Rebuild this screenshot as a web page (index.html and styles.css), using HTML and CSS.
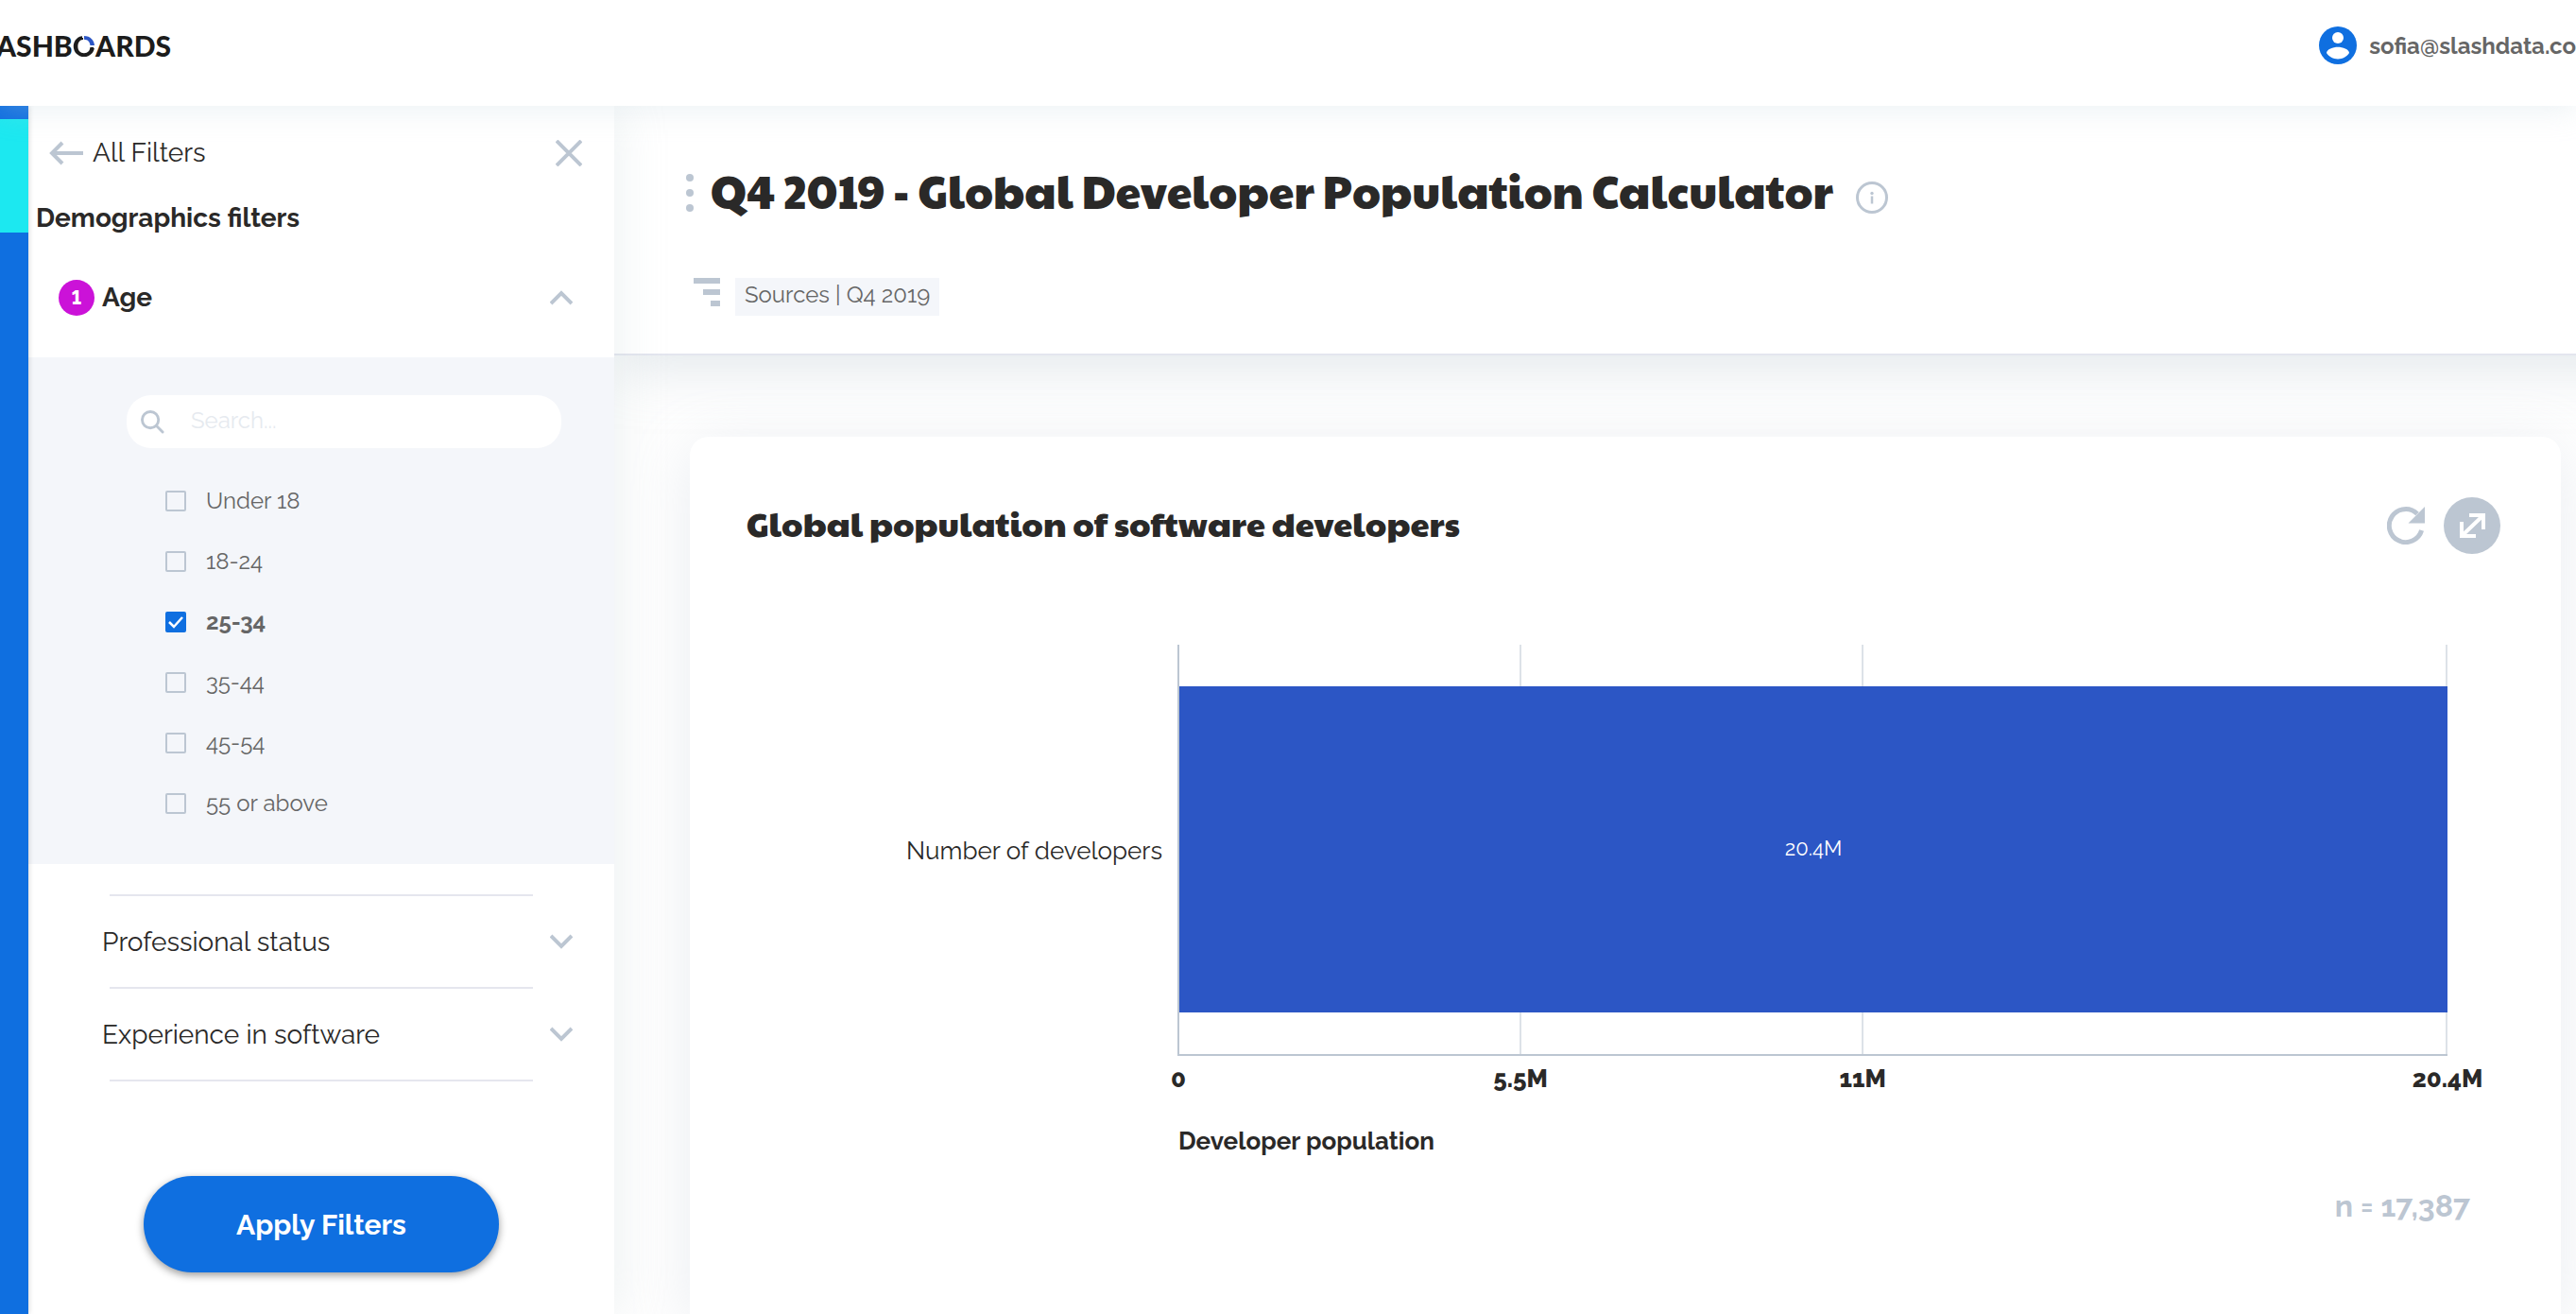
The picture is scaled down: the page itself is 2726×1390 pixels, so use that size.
FILE: index.html
```html
<!DOCTYPE html>
<html lang="en">
<head>
    <meta charset="UTF-8">
    <meta name="viewport" content="width=device-width, initial-scale=1.0">
    <title>Global Developer Population Calculator</title>
    <link rel="stylesheet" href="styles.css">
</head>
<body>

    <header class="topbar">
        <a href="#" class="logo">ASHB<span class="logo-o">O</span>ARDS</a>
        <a href="#account" class="account">
            <svg width="40" height="40" viewBox="0 0 40 40" aria-hidden="true">
                <circle cx="20" cy="20" r="20" fill="#0f6fe0"/>
                <circle cx="20" cy="12" r="6" fill="#fff"/>
                <path d="M8 28c0-4 7-6.300 12-6.300S32 24 32 28c-2.600 4-7 6.400-12 6.400S10.600 32 8 28z" fill="#fff"/>
            </svg>
            <span>sofia@slashdata.co</span>
        </a>
    </header>

    <div class="layout">
        <nav class="rail" aria-label="Main">
            <a href="#calculator" class="rail-active" aria-label="Calculator"></a>
        </nav>

        <aside class="filters">
            <div class="filters-top">
                <button type="button" class="back">
                    <svg width="36" height="28" viewBox="0 0 36 28" aria-hidden="true">
                        <path d="M36 14H3M14 3 3 14l11 11" fill="none" stroke="#bcc6d2" stroke-width="4"/>
                    </svg>
                    All Filters
                </button>
                <button type="button" class="icon-btn" aria-label="Close">
                    <svg width="28" height="28" viewBox="0 0 28 28">
                        <path d="M1 1l26 26M27 1 1 27" stroke="#bcc6d2" stroke-width="4"/>
                    </svg>
                </button>
            </div>
            <h2 class="filters-title">Demographics filters</h2>

            <button type="button" class="group group-open">
                <span class="badge">1</span>
                <span class="group-name">Age</span>
                <svg width="24" height="16" viewBox="0 0 24 16" aria-hidden="true">
                    <path d="M1 14 12 3l11 11" fill="none" stroke="#bcc6d2" stroke-width="4"/>
                </svg>
            </button>

            <div class="options">
                <div class="search">
                    <svg width="25" height="25" viewBox="0 0 26 26" aria-hidden="true">
                        <circle cx="10.500" cy="10.500" r="9" fill="none" stroke="#bcc6d2" stroke-width="3"/>
                        <path d="M17 17l7 7" stroke="#bcc6d2" stroke-width="3" stroke-linecap="round"/>
                    </svg>
                    <input type="text" placeholder="Search..." aria-label="Search">
                </div>
                <label class="option"><input type="checkbox"><span>Under 18</span></label>
                <label class="option"><input type="checkbox"><span>18-24</span></label>
                <label class="option"><input type="checkbox" checked><span>25-34</span></label>
                <label class="option"><input type="checkbox"><span>35-44</span></label>
                <label class="option"><input type="checkbox"><span>45-54</span></label>
                <label class="option"><input type="checkbox"><span>55 or above</span></label>
            </div>

            <div class="groups">
                <hr>
                <button type="button" class="group">
                    <span class="group-name">Professional status</span>
                    <svg width="24" height="16" viewBox="0 0 24 16" aria-hidden="true">
                        <path d="M1 2l11 11L23 2" fill="none" stroke="#bcc6d2" stroke-width="4"/>
                    </svg>
                </button>
                <hr>
                <button type="button" class="group">
                    <span class="group-name">Experience in software</span>
                    <svg width="24" height="16" viewBox="0 0 24 16" aria-hidden="true">
                        <path d="M1 2l11 11L23 2" fill="none" stroke="#bcc6d2" stroke-width="4"/>
                    </svg>
                </button>
                <hr>
            </div>

            <button type="button" class="apply">Apply Filters</button>
        </aside>

        <main class="content">
            <section class="heading">
                <div class="title-row">
                    <svg width="8" height="40" viewBox="0 0 8 40" fill="#bcc6d2" aria-hidden="true">
                        <circle cx="4" cy="4" r="4"/>
                        <circle cx="4" cy="20" r="4"/>
                        <circle cx="4" cy="36" r="4"/>
                    </svg>
                    <h1>Q4 2019 - Global Developer Population Calculator</h1>
                    <button type="button" class="icon-btn info" aria-label="Info">
                        <svg width="34" height="34" viewBox="0 0 34 34">
                            <circle cx="17" cy="17" r="15.500" fill="none" stroke="#bcc6d2" stroke-width="3"/>
                            <circle cx="17" cy="12.500" r="1.700" fill="#bcc6d2"/>
                            <path d="M17 15.500v8" stroke="#bcc6d2" stroke-width="2.500"/>
                        </svg>
                    </button>
                </div>
                <div class="source-row">
                    <svg width="28" height="30" viewBox="0 0 28 30" fill="#bcc6d2" aria-hidden="true">
                        <rect width="28" height="6"/>
                        <rect x="10" y="12" width="18" height="6"/>
                        <rect x="18" y="24" width="10" height="6"/>
                    </svg>
                    <span class="tag">Sources | Q4 2019</span>
                </div>
            </section>

            <section class="card">
                <div class="card-top">
                    <h2>Global population of software developers</h2>
                    <button type="button" class="icon-btn" aria-label="Refresh">
                        <svg width="40" height="40" viewBox="0 0 40 40">
                            <path d="M36.600 25A17.500 17.500 0 1 1 32 7.500" fill="none" stroke="#bcc6d2" stroke-width="5"/>
                            <path d="M40 0v17.500H22.500z" fill="#bcc6d2"/>
                        </svg>
                    </button>
                    <button type="button" class="icon-btn" aria-label="Expand">
                        <svg width="60" height="60" viewBox="0 0 60 60">
                            <circle cx="30" cy="30" r="30" fill="#bcc6d2"/>
                            <path d="M27 19h15v15M19 26v15h15M19 41 42 19" fill="none" stroke="#fff" stroke-width="4"/>
                        </svg>
                    </button>
                </div>

                <div class="chart">
                    <div class="series">Number of developers</div>
                    <div class="plot">
                        <div class="grid">
                            <i></i><i></i><i></i>
                        </div>
                        <div class="bar">20.4M</div>
                    </div>
                    <div class="ticks">
                        <span>0</span><span>5.5M</span><span>11M</span><span>20.4M</span>
                    </div>
                    <div class="axis-title">Developer population</div>
                </div>

                <p class="sample">n = 17,387</p>
            </section>
        </main>
    </div>

</body>
</html>
```

FILE: styles.css
```css
* {
    box-sizing: border-box;
}
body {
    margin: 0;
    min-height: 100vh;
    display: flex;
    flex-direction: column;
    font-family: Raleway, "Open Sans", sans-serif;
    font-size: 26px;
    color: #2a2928;
    background-color: #fefefe;
    overflow: hidden;
}
h1, h2, p {
    margin: 0;
}
h1, .card-top h2 {
    font-family: "Paytone One", Raleway, "Open Sans", sans-serif;
    font-weight: 400;
    font-kerning: none;
    font-variant-ligatures: none;
}
button {
    font: inherit;
    color: inherit;
    background: none;
    border: none;
    padding: 0;
    cursor: pointer;
}
svg {
    display: block;
    flex: none;
}
.icon-btn {
    flex: none;
}

/* top bar */
.topbar {
    position: relative;
    z-index: 3;
    height: 112px;
    padding-bottom: 16px;
    display: flex;
    align-items: center;
    justify-content: space-between;
    background-color: #fff;
    box-shadow: 0 4px 30px rgba(190, 210, 220, 0.3);
}
.logo {
    width: 181px;
    display: flex;
    justify-content: flex-end;
    font-family: Lato, sans-serif;
    font-size: 30px;
    font-weight: 900;
    color: #1c1c1c;
    text-decoration: none;
}
.logo-o {
    color: transparent;
    background: conic-gradient(at 50% 52%, #2c56c5 0 85deg, #fff 85deg 100deg, #1c1c1c 100deg 350deg, #fff 350deg);
    background-clip: text;
    -webkit-background-clip: text;
}
.account {
    display: flex;
    align-items: center;
    gap: 13px;
    font-size: 24px;
    font-weight: 700;
    color: #666;
    text-decoration: none;
}

.layout {
    flex: 1;
    display: flex;
}

/* left rail */
.rail {
    width: 30px;
    padding-top: 14px;
    background-color: #0f6fe0;
    position: relative;
    z-index: 2;
    box-shadow: 0 0 6px rgba(0, 0, 0, 0.2);
}
.rail-active {
    display: block;
    height: 120px;
    background-color: #1ce8f0;
}

/* filter panel */
.filters {
    width: 620px;
    flex: none;
    position: relative;
    z-index: 1;
    background-color: #fff;
    box-shadow: 0 0 50px rgba(190, 205, 210, 0.3);
}
.filters-top {
    display: flex;
    justify-content: space-between;
    align-items: center;
    padding: 30px 34px 0 22px;
}
.back {
    display: flex;
    align-items: center;
    gap: 10px;
    font-size: 28px;
    line-height: 40px;
}
.filters-title {
    padding-left: 8px;
    margin-top: 29px;
    font-size: 28px;
    font-weight: 700;
    line-height: 40px;
}
.group {
    width: 100%;
    height: 96px;
    display: flex;
    align-items: center;
    padding: 0 44px 0 78px;
    font-size: 28px;
    text-align: left;
}
.group-open {
    height: 127px;
    padding-left: 32px;
    font-weight: 700;
}
.group-name {
    flex: 1;
}
.badge {
    width: 38px;
    height: 38px;
    margin-right: 8px;
    border-radius: 50%;
    background-color: #cb12d8;
    color: #fff;
    font-size: 20px;
    font-weight: 800;
    font-variant-numeric: lining-nums;
    line-height: 38px;
    text-align: center;
}
.options {
    height: 536px;
    padding: 40px 56px 0 104px;
    background-color: #f4f6fa;
}
.search {
    height: 56px;
    margin-bottom: 24px;
    padding: 0 15px;
    display: flex;
    align-items: center;
    gap: 28px;
    border-radius: 26px;
    background-color: #fff;
}
.search input {
    flex: 1;
    min-width: 0;
    padding: 0 0 4px;
    border: none;
    outline: none;
    background: none;
    font: inherit;
    font-size: 24px;
}
.search input::placeholder {
    color: #e6eaef;
}
.option {
    height: 64px;
    padding-left: 41px;
    display: flex;
    align-items: center;
    gap: 21px;
    font-size: 24px;
    color: #666;
}
.option input {
    appearance: none;
    width: 22px;
    height: 22px;
    margin: 0;
    border: 2px solid #bcc6d2;
    border-radius: 2px;
}
.option input:checked {
    border-color: #0f6fe0;
    background: #0f6fe0 url("data:image/svg+xml,%3Csvg xmlns='http://www.w3.org/2000/svg' viewBox='0 0 18 18'%3E%3Cpath d='M2 9l5 5 9-10' fill='none' stroke='white' stroke-width='2.500'/%3E%3C/svg%3E") center no-repeat;
}
.option span {
    padding-bottom: 2px;
}
.option input:checked + span {
    font-weight: 700;
}
.groups {
    padding-top: 32px;
}
.groups hr {
    margin: 0 86px;
    border: none;
    height: 2px;
    background-color: #e5e6ee;
}
.apply {
    display: block;
    width: 376px;
    height: 102px;
    margin: 100px auto 44px 122px;
    border-radius: 51px;
    background-color: #0f6fe0;
    color: #fff;
    font-size: 30px;
    font-weight: 700;
    box-shadow: 0 3px 8px rgba(0, 0, 0, 0.4);
}

/* main area */
.content {
    flex: 1;
    min-width: 0;
    display: flex;
    flex-direction: column;
}
/* runs past the right edge so its shadow does not fade there */
.heading {
    height: 264px;
    margin-right: -80px;
    padding: 60px 76px 0;
    border-bottom: 2px solid #e3e5ee;
    background-color: #fff;
    box-shadow: 0 10px 60px rgba(180, 195, 205, 0.4);
}
.title-row {
    display: flex;
    align-items: center;
    gap: 18px;
    height: 64px;
}
.title-row h1 {
    padding-bottom: 6px;
    font-size: 48px;
    white-space: nowrap;
}
.info {
    padding: 10px 0 0 6px;
}
.source-row {
    display: flex;
    gap: 16px;
    padding: 58px 0 0 8px;
}
.tag {
    height: 40px;
    padding: 0 10px;
    background-color: #f4f6fa;
    font-size: 24px;
    line-height: 36px;
    color: #666;
}

.card {
    flex: 1;
    margin: 86px 16px 0 80px;
    padding: 64px 64px 0 60px;
    border-radius: 20px 20px 0 0;
    background-color: #fff;
    box-shadow: 0 10px 60px rgba(190, 200, 212, 0.3);
}
.card-top {
    display: flex;
    align-items: center;
    gap: 20px;
    height: 60px;
}
.card-top h2 {
    flex: 1;
    padding-bottom: 6px;
    font-size: 36px;
}

/* bar chart */
.chart {
    display: grid;
    grid-template-columns: 456px 1fr;
    margin: 96px 56px 0 0;
}
.series {
    align-self: center;
    padding-right: 16px;
    text-align: right;
}
.plot {
    display: grid;
    height: 435px;
    border-left: 2px solid #bcc6d2;
    border-bottom: 2px solid #bcc6d2;
}
.grid, .bar {
    grid-area: 1 / 1;
}
.grid, .ticks {
    display: grid;
    grid-template-columns: 55fr 55fr 94fr 0;
}
.grid i {
    border-right: 2px solid #dde2e8;
}
.bar {
    margin: 44px 0;
    padding-bottom: 4px;
    display: flex;
    align-items: center;
    justify-content: center;
    background-color: #2c56c5;
    color: #fff;
    font-size: 22px;
}
.ticks {
    grid-column: 2;
    margin-top: 6px;
    padding-left: 1px;
    font-size: 26px;
    font-weight: 800;
    line-height: 36px;
}
.ticks span {
    width: 0;
    display: flex;
    justify-content: center;
}
.axis-title {
    grid-column: 2;
    margin-top: 30px;
    padding-left: 1px;
    font-weight: 700;
    line-height: 36px;
}
.sample {
    margin-top: 32px;
    padding-right: 32px;
    text-align: right;
    font-size: 32px;
    font-weight: 700;
    color: #bcc6d2;
}
```
